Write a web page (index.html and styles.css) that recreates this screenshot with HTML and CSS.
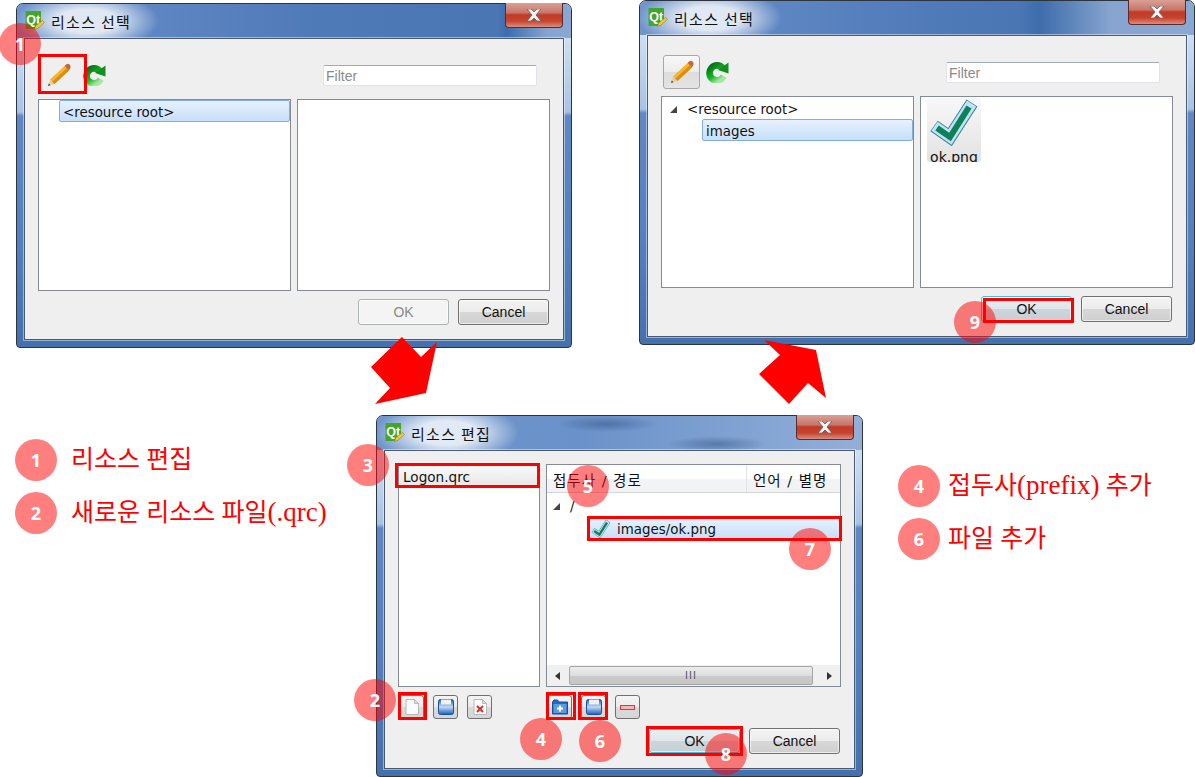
FILE: index.html
```html
<!DOCTYPE html>
<html>

<head>
  <meta http-equiv="Content-Type" content="text/html; charset=utf-8">
  <link rel="stylesheet" href="styles.css">
</head>

<body>

  <svg width="0" height="0" class="defs">
    <defs>
      <linearGradient id="swirl" x1="0" y1="0" x2="0.7" y2="1">
        <stop offset="0" stop-color="#0a6a22"></stop>
        <stop offset="0.6" stop-color="#14b81c"></stop>
        <stop offset="1" stop-color="#a8e6a8"></stop>
      </linearGradient>
      <linearGradient id="disk" x1="0" y1="0" x2="0" y2="1">
        <stop offset="0" stop-color="#1f63c4"></stop>
        <stop offset="0.5" stop-color="#c3d8f2"></stop>
        <stop offset="1" stop-color="#1a5cbc"></stop>
      </linearGradient>
      <symbol id="qt" viewBox="0 0 20 20">
        <path d="M0.500 0H16V13L12 18H0.500Z" fill="#41a62a"></path>
        <text x="1.200" y="12.500" class="qt-text">Qt</text>
        <path d="M9.500 18.500L10.500 15L17.500 9.500L19.500 11.500L12.500 17.500Z" fill="#f0c83c" stroke="#8a6a20" stroke-width="0.500"></path>
      </symbol>
      <symbol id="pencil" viewBox="0 0 24 24">
        <path d="M1 23L3 16.500L7.500 21Z" fill="#e8cda0"></path>
        <path d="M1 23L1.800 20.500L3.500 22.200Z" fill="#444"></path>
        <path d="M3 16.500L17.500 3L22 7.500L7.500 21Z" fill="#f6b62c"></path>
        <path d="M5.200 18.700L19.700 5.200L22 7.500L7.500 21Z" fill="#d98c18"></path>
        <path d="M17.500 3L19.500 1.200Q21 0.300 22.600 1.500Q24 3 23.500 4.500L22 7.500Z" fill="#c9653a"></path>
      </symbol>
      <symbol id="refresh" viewBox="0 0 24 24">
        <path d="M17.500 8.500A7.800 7.800 0 1 0 18.500 17" fill="none" stroke="url(#swirl)" stroke-width="7"></path>
        <path d="M23.500 2.500V14L12.500 10.500Z" fill="#128f20"></path>
      </symbol>
      <symbol id="check" viewBox="0 0 54 50">
        <polyline points="7,28 23,39 45,5" fill="none" stroke="#3a8596" stroke-width="13"></polyline>
        <polyline points="7.500,28.300 23,39 44.600,5.600" fill="none" stroke="#bfe2f6" stroke-width="11"></polyline>
        <polyline points="10,30 23,39 42,9" fill="none" stroke="#10805a" stroke-width="6"></polyline>
      </symbol>
      <symbol id="doc" viewBox="0 0 16 16">
        <path d="M2 0.500H10.500L14.500 4.500V15.500H2Z" fill="#fbfbfb" stroke="#b9b9b9"></path>
        <path d="M10.500 0.500V4.500H14.500Z" fill="#dcdcdc" stroke="#b9b9b9"></path>
      </symbol>
      <symbol id="save" viewBox="0 0 16 16">
        <rect x="0.500" y="0.500" width="15" height="15" rx="2" fill="url(#disk)" stroke="#1551a8"></rect>
        <rect x="3" y="0.500" width="10" height="5" fill="#f1f1f1"></rect>
      </symbol>
    </defs>
  </svg>

  <div class="stage">

    <!-- first dialog -->
    <div class="window win-a">
      <div class="titlebar bar-a">
        <svg class="qt-icon"><use href="#qt"></use></svg>
        <span class="title">리소스 선택</span>
        <span class="close"><svg viewBox="0 0 16 12"><path d="M1 0H5L8 3L11 0H15L10 6L15 12H11L8 9L5 12H1L6 6Z"></path></svg></span>
      </div>
      <div class="client picker">
        <div class="tool-row">
          <span class="tool flat"><svg class="pencil"><use href="#pencil"></use></svg></span>
          <svg class="refresh"><use href="#refresh"></use></svg>
          <span class="filter">Filter</span>
        </div>
        <div class="panes">
          <div class="pane">
            <div class="row selected indent-a">&lt;resource root&gt;</div>
          </div>
          <div class="pane"></div>
        </div>
        <div class="button-row">
          <span class="btn disabled">OK</span>
          <span class="btn">Cancel</span>
        </div>
      </div>
    </div>

    <!-- same dialog after the prefix and file are added -->
    <div class="window win-b">
      <div class="titlebar bar-b">
        <svg class="qt-icon"><use href="#qt"></use></svg>
        <span class="title">리소스 선택</span>
        <span class="close"><svg viewBox="0 0 16 12"><path d="M1 0H5L8 3L11 0H15L10 6L15 12H11L8 9L5 12H1L6 6Z"></path></svg></span>
      </div>
      <div class="client picker">
        <div class="tool-row">
          <span class="tool"><svg class="pencil"><use href="#pencil"></use></svg></span>
          <svg class="refresh"><use href="#refresh"></use></svg>
          <span class="filter">Filter</span>
        </div>
        <div class="panes">
          <div class="pane">
            <div class="row root-row"><i class="twisty"></i>&lt;resource root&gt;</div>
            <div class="row selected indent-b">images</div>
          </div>
          <div class="pane">
            <div class="thumb">
              <svg class="thumb-check"><use href="#check"></use></svg>
              <span class="thumb-label">ok.png</span>
            </div>
          </div>
        </div>
        <div class="button-row">
          <span class="btn default">OK</span>
          <span class="btn">Cancel</span>
        </div>
      </div>
    </div>

    <!-- resource editor -->
    <div class="window win-c">
      <div class="titlebar bar-c">
        <svg class="qt-icon"><use href="#qt"></use></svg>
        <span class="title">리소스 편집</span>
        <span class="close"><svg viewBox="0 0 16 12"><path d="M1 0H5L8 3L11 0H15L10 6L15 12H11L8 9L5 12H1L6 6Z"></path></svg></span>
      </div>
      <div class="client editor">
        <div class="editor-panes">
          <div class="pane">
            <div class="file-row">Logon.qrc</div>
          </div>
          <div class="pane prefix-pane">
            <div class="header">
              <span class="col-path">접두사 / 경로</span>
              <span class="col-lang">언어 / 별명</span>
            </div>
            <div class="prefix-tree">
              <div class="row slash-row"><i class="twisty"></i>/</div>
              <div class="row selected file-entry">
                <svg class="mini-check"><use href="#check"></use></svg>images/ok.png
              </div>
            </div>
            <div class="hbar">
              <i class="arrow-left"></i>
              <span class="hthumb"><b>III</b></span>
              <i class="arrow-right"></i>
            </div>
          </div>
        </div>
        <div class="icon-row">
          <div class="icon-group left-group">
            <span class="icon-btn"><svg class="i16"><use href="#doc"></use></svg></span>
            <span class="icon-btn"><svg class="i16"><use href="#save"></use></svg></span>
            <span class="icon-btn">
              <svg class="i16" viewBox="0 0 16 16">
                <use href="#doc" width="16" height="16"></use>
                <path d="M5 7L11 13M11 7L5 13" stroke="#d83030" stroke-width="2"></path>
              </svg>
            </span>
          </div>
          <div class="icon-group">
            <span class="icon-btn">
              <svg class="i16" viewBox="0 0 16 16">
                <path d="M0.500 3V15H15.500V3H7L5.500 1H2Z" fill="#1f69c8" stroke="#124f9f"></path>
                <rect x="1.500" y="5" width="13" height="9" fill="#5b9ae0"></rect>
                <path d="M8 6.500V12.500M5 9.500H11" stroke="#fff" stroke-width="2"></path>
              </svg>
            </span>
            <span class="icon-btn"><svg class="i16"><use href="#save"></use></svg></span>
            <span class="icon-btn"><i class="minus"></i></span>
          </div>
        </div>
        <div class="button-row editor-buttons">
          <span class="btn default">OK</span>
          <span class="btn">Cancel</span>
        </div>
      </div>
    </div>

    <!-- big arrows between the dialogs -->
    <svg class="arrows" viewBox="0 0 1195 777">
      <polygon points="402,337 421,357 437,342 426,393 375,404 390,388 371,367"></polygon>
      <polygon points="764,340 816,350 826,398 808,383 789,404 759,374 780,355"></polygon>
    </svg>

    <!-- red highlight boxes -->
    <div class="mark mark-pencil"></div>
    <div class="mark mark-ok-b"></div>
    <div class="mark mark-file"></div>
    <div class="mark mark-entry"></div>
    <div class="mark mark-new"></div>
    <div class="mark mark-folder"></div>
    <div class="mark mark-save"></div>
    <div class="mark mark-ok-c"></div>

    <!-- numbered badges on the dialogs -->
    <span class="badge on-a1">1</span>
    <span class="badge on-b9">9</span>
    <span class="badge on-c3">3</span>
    <span class="badge on-c5">5</span>
    <span class="badge on-c7">7</span>
    <span class="badge on-c2">2</span>
    <span class="badge on-c4">4</span>
    <span class="badge on-c6">6</span>
    <span class="badge on-c8">8</span>

    <div class="legend legend-left">
      <div class="note"><span class="badge">1</span><span>리소스 편집</span></div>
      <div class="note"><span class="badge">2</span><span>새로운 리소스 파일<span class="latin">(.qrc)</span></span></div>
    </div>

    <div class="legend legend-right">
      <div class="note"><span class="badge">4</span><span>접두사<span class="latin">(prefix)</span> 추가</span></div>
      <div class="note"><span class="badge">6</span><span>파일 추가</span></div>
    </div>

  </div>

</body>

</html>
```

FILE: styles.css
```css
* {
  box-sizing: border-box;
}

body {
  margin: 0;
  background: #fff;
  font-family: "DejaVu Sans", "Noto Sans CJK KR", sans-serif;
}

.defs {
  position: absolute;
}

.qt-text {
  font-family: "Liberation Sans", sans-serif;
  font-size: 12.500px;
  font-weight: bold;
  fill: #fff;
}

.stage {
  position: relative;
  width: 1195px;
  height: 777px;
  overflow: hidden;
}

/* windows */

.window {
  position: absolute;
  display: flex;
  flex-direction: column;
  border: 1px solid #2c3440;
  border-radius: 7px 7px 4px 4px;
  background: linear-gradient(#a9c5e8 0, #cfdff2 32px, #a8c3e6 108px, #5f88c4 112px, #5480bf 240px, #4470ad 100%);
}

.win-a {
  left: 16px;
  top: 3px;
  width: 556px;
  height: 345px;
}

.win-b {
  left: 639px;
  top: 0;
  width: 556px;
  height: 345px;
}

.win-c {
  left: 376px;
  top: 415px;
  width: 487px;
  height: 362px;
}

.titlebar {
  display: flex;
  align-items: flex-start;
  flex: none;
  height: 34px;
  padding-left: 8px;
  border-radius: 6px 6px 0 0;
}

.bar-a {
  background:
    radial-gradient(ellipse 72px 30px at 70px 17px, rgba(255, 255, 255, .8) 40%, rgba(255, 255, 255, 0) 100%),
    linear-gradient(90deg, #6f95cb 0, #5f87c3 120px, #4f7ab8 300px, #4a76b4 480px, #3e6dac 490px, #86a4cf 530px, #8aa8d2 100%);
}

.bar-b {
  background:
    radial-gradient(ellipse 72px 30px at 70px 17px, rgba(255, 255, 255, .8) 40%, rgba(255, 255, 255, 0) 100%),
    linear-gradient(90deg, #6f95cb 0, #5f87c3 120px, #4f7ab8 300px, #4a76b4 380px, #3e6dac 400px, #86a4cf 470px, #8aa8d2 100%);
}

.bar-c {
  background:
    radial-gradient(ellipse 72px 30px at 70px 17px, rgba(255, 255, 255, .8) 40%, rgba(255, 255, 255, 0) 100%),
    radial-gradient(ellipse 50px 8px at 230px 8px, rgba(50, 80, 130, .5) 0, rgba(50, 80, 130, 0) 100%),
    radial-gradient(ellipse 50px 8px at 340px 28px, rgba(50, 80, 130, .5) 0, rgba(50, 80, 130, 0) 100%),
    linear-gradient(90deg, #7096cc 0, #6a91c9 200px, #7c9fd0 330px, #93afd8 100%);
}

.qt-icon {
  flex: none;
  width: 20px;
  height: 20px;
  margin-top: 7px;
}

.title {
  margin: 8px 0 0 6px;
  font-family: "Noto Sans CJK KR", sans-serif;
  font-size: 15px;
  line-height: 20px;
  letter-spacing: 1.300px;
  color: #111;
}

.close {
  display: flex;
  align-items: center;
  justify-content: center;
  flex: none;
  width: 58px;
  height: 25px;
  margin: -1px 8px 0 auto;
  border: 1px solid #5c2a2a;
  border-top: 0;
  border-radius: 0 0 4px 4px;
  background: linear-gradient(#d9a097 0, #c8776a 40%, #c13a28 50%, #c8432e 75%, #d98f80 100%);
}

.close svg {
  width: 16px;
  height: 12px;
  fill: #f4f4f4;
  stroke: #555;
  stroke-width: 0.700;
}

.client {
  flex: 1;
  margin: 0 7px 7px;
  border: 1px solid #4b5a6e;
  background: #efefef;
  box-shadow: 0 0 0 1px rgba(255, 255, 255, .45);
}

/* resource picker */

.picker {
  padding: 19px 0 0 13px;
}

.tool-row {
  display: flex;
  height: 34px;
}

.tool {
  display: flex;
  align-items: center;
  justify-content: center;
  flex: none;
  width: 37px;
  height: 34px;
  margin-left: 2px;
  border: 1px solid #a8a8a8;
  border-radius: 3px;
  background: linear-gradient(#f8f8f8 0, #ececec 50%, #dcdcdc 50%, #e4e4e4 100%);
}

.tool.flat {
  border-color: transparent;
  background: none;
}

.pencil {
  width: 24px;
  height: 24px;
}

.refresh {
  flex: none;
  width: 23px;
  height: 23px;
  margin: 5px 0 0 6px;
}

.filter {
  width: 214px;
  height: 21px;
  margin: 7px 26px 0 auto;
  padding-left: 2px;
  border: 1px solid #e2e3ea;
  border-top-color: #a6abb3;
  border-radius: 2px;
  background: #fff;
  font-family: "Liberation Sans", sans-serif;
  font-size: 14px;
  line-height: 21px;
  color: #8a8a8a;
}

.panes {
  display: flex;
  gap: 6px;
  height: 192px;
  margin-top: 7px;
}

.pane {
  flex: none;
  width: 253px;
  border: 1px solid #848b96;
  background: #fff;
}

.row {
  display: flex;
  align-items: center;
  height: 22px;
  padding-top: 2px;
  font-size: 13.400px;
  color: #111;
}

.selected {
  border: 1px solid #84acdd;
  border-radius: 2px;
  padding-left: 3px;
  background: linear-gradient(#e6f1fe, #c7dff9);
}

.indent-a {
  margin-left: 20px;
}

.indent-b {
  margin-left: 40px;
}

.root-row {
  padding-left: 8px;
}

.twisty {
  flex: none;
  width: 0;
  height: 0;
  margin-right: 10px;
  border-style: solid;
  border-width: 0 0 7px 7px;
  border-color: transparent transparent #444 transparent;
}

.thumb {
  position: relative;
  width: 54px;
  height: 64px;
  margin: 1px 0 0 6px;
  overflow: hidden;
  border-radius: 3px;
  background: linear-gradient(#f8f8f8, #e2e2e2);
}

.thumb-check {
  display: block;
  width: 54px;
  height: 50px;
}

.thumb-label {
  display: block;
  font-size: 14px;
  line-height: 18px;
  text-align: center;
  color: #111;
}

.button-row {
  display: flex;
  justify-content: flex-end;
  gap: 9px;
  width: 511px;
  margin-top: 8px;
}

.btn {
  flex: none;
  width: 91px;
  height: 26px;
  border: 1px solid #707070;
  border-radius: 3px;
  background: linear-gradient(#f4f4f4 0, #ebebeb 50%, #d8d8d8 50%, #cfcfcf 100%);
  box-shadow: inset 0 0 0 1px rgba(255, 255, 255, .6);
  font-family: "Liberation Sans", sans-serif;
  font-size: 14px;
  line-height: 24px;
  text-align: center;
  color: #111;
}

.btn.disabled {
  border-color: #adb2b5;
  background: #f4f4f4;
  color: #8a8a8a;
}

.btn.default {
  border-color: #35c3e6;
  background: linear-gradient(#e9eef2 0, #dfe6ea 50%, #ccd5da 50%, #c6d0d5 100%);
}

/* resource editor */

.editor {
  padding: 13px 0 0 13px;
}

.editor-panes {
  display: flex;
  gap: 6px;
  height: 223px;
}

.editor-panes .pane {
  width: 142px;
}

.editor-panes .prefix-pane {
  display: flex;
  flex-direction: column;
  width: 295px;
}

.file-row {
  height: 22px;
  padding-left: 4px;
  background: linear-gradient(#fafafa, #e6e6e6);
  font-size: 13.600px;
  line-height: 24px;
  color: #111;
}

.header {
  display: flex;
  flex: none;
  height: 28px;
  border-bottom: 1px solid #d5d5d5;
  background: linear-gradient(#fff 0, #fff 50%, #f2f3f5 50%, #f2f3f5 100%);
  font-size: 14.500px;
  line-height: 32px;
  letter-spacing: 1px;
  color: #111;
}

.col-path {
  width: 200px;
  padding-left: 6px;
  border-right: 1px solid #dfe3e8;
}

.col-lang {
  padding-left: 6px;
}

.prefix-tree {
  flex: 1;
  padding-top: 2px;
}

.slash-row {
  height: 22px;
  padding-top: 0;
  padding-left: 6px;
}

.file-entry {
  margin: 1px -1px 0 40px;
  padding-top: 0;
  padding-left: 2px;
}

.mini-check {
  flex: none;
  width: 22px;
  height: 20px;
  margin-right: 5px;
}

.hbar {
  display: flex;
  align-items: center;
  flex: none;
  height: 21px;
  padding: 0 8px;
  background: #f0f0f0;
}

.arrow-left {
  border-style: solid;
  border-width: 4px 5px 4px 0;
  border-color: transparent #333 transparent transparent;
}

.arrow-right {
  border-style: solid;
  border-width: 4px 0 4px 5px;
  border-color: transparent transparent transparent #333;
}

.hthumb {
  flex: 1;
  height: 19px;
  margin: 0 14px 0 9px;
  border: 1px solid #a6a6a6;
  border-radius: 2px;
  background: linear-gradient(#ececec 0, #dedede 50%, #cbcbcb 50%, #c6c6c6 100%);
  text-align: center;
  font-size: 10px;
  line-height: 17px;
  color: #555;
}

.hthumb b {
  font-weight: normal;
  letter-spacing: 1px;
}

.icon-row {
  display: flex;
  gap: 6px;
  margin-top: 8px;
}

.icon-group {
  display: flex;
  gap: 9px;
  padding-left: 1px;
}

.left-group {
  width: 142px;
}

.icon-btn {
  display: flex;
  align-items: center;
  justify-content: center;
  flex: none;
  width: 25px;
  height: 24px;
  border: 1px solid #707070;
  border-radius: 3px;
  background: linear-gradient(#f4f4f4 0, #ebebeb 50%, #dadada 50%, #d6d6d6 100%);
}

.i16 {
  width: 16px;
  height: 16px;
}

.minus {
  width: 15px;
  height: 5px;
  border: 1px solid #d43c3c;
  background: #f7b5b5;
}

.editor-buttons {
  align-items: center;
  width: 442px;
  margin-top: 9px;
}

.editor-buttons .btn.default {
  height: 24px;
  line-height: 22px;
}

/* overlays */

.arrows {
  position: absolute;
  left: 0;
  top: 0;
  width: 1195px;
  height: 777px;
  fill: #f00;
}

.mark {
  position: absolute;
  border: 3px solid #f00;
}

.mark-pencil {
  left: 38px;
  top: 54px;
  width: 49px;
  height: 40px;
}

.mark-ok-b {
  left: 983px;
  top: 298px;
  width: 91px;
  height: 25px;
}

.mark-file {
  left: 395px;
  top: 463px;
  width: 145px;
  height: 25px;
}

.mark-entry {
  left: 587px;
  top: 516px;
  width: 255px;
  height: 25px;
}

.mark-new {
  left: 398px;
  top: 692px;
  width: 29px;
  height: 28px;
}

.mark-folder {
  left: 546px;
  top: 692px;
  width: 30px;
  height: 28px;
}

.mark-save {
  left: 578px;
  top: 692px;
  width: 30px;
  height: 28px;
}

.mark-ok-c {
  left: 646px;
  top: 726px;
  width: 97px;
  height: 30px;
}

.badge {
  display: flex;
  align-items: center;
  justify-content: center;
  flex: none;
  width: 42px;
  height: 42px;
  border-radius: 50%;
  background: rgba(255, 0, 0, .5);
  font-family: "Noto Sans", sans-serif;
  font-size: 18px;
  font-weight: 700;
  color: #fff;
}

.on-a1, .on-b9, .on-c2, .on-c3, .on-c4, .on-c5, .on-c6, .on-c7, .on-c8 {
  position: absolute;
}

.on-a1 {
  left: -1px;
  top: 23px;
}

.on-b9 {
  left: 954px;
  top: 301px;
}

.on-c3 {
  left: 347px;
  top: 444px;
}

.on-c5 {
  left: 567px;
  top: 465px;
}

.on-c7 {
  left: 789px;
  top: 528px;
}

.on-c2 {
  left: 354px;
  top: 679px;
}

.on-c4 {
  left: 520px;
  top: 718px;
}

.on-c6 {
  left: 579px;
  top: 720px;
}

.on-c8 {
  left: 705px;
  top: 733px;
}

.legend {
  position: absolute;
  display: flex;
  flex-direction: column;
}

.legend-left {
  left: 15px;
  top: 439px;
  gap: 10px;
}

.legend-right {
  left: 898px;
  top: 464px;
  gap: 11px;
}

.note {
  display: flex;
  align-items: center;
  gap: 14px;
  font-family: "Liberation Serif", "Noto Sans CJK KR", serif;
  font-size: 25px;
  line-height: 42px;
  white-space: nowrap;
  color: #f00;
}

.latin {
  font-size: 27px;
}

.legend-right .note {
  gap: 8px;
}
```
